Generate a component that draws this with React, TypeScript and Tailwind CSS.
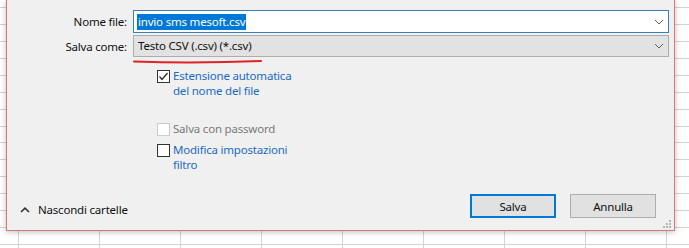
import React from "react";

const font = { fontFamily: '"Noto Sans", "Open Sans", sans-serif' };

function GridBackground() {
  const hs: number[] = [];
  for (let k = 0; k < 15; k++) hs.push(Math.round(7 + k * 16.93) + 0.5);
  const vs: number[] = [18.5];
  for (let k = 1; k < 9; k++) vs.push(18.5 + k * 81);
  return (
    <svg className="absolute inset-0" width="689" height="248">
      {hs.map((y) => (
        <line key={"h" + y} x1="0" x2="689" y1={y} y2={y} stroke="#d4d4d4" strokeWidth="1" />
      ))}
      {vs.map((x) => (
        <line key={"v" + x} x1={x} x2={x} y1="0" y2="248" stroke="#d4d4d4" strokeWidth="1" />
      ))}
    </svg>
  );
}

function ChevronDown() {
  return (
    <svg width="10" height="6" viewBox="0 0 10 6" className="shrink-0">
      <polyline points="1,1 5,5 9,1" fill="none" stroke="#606060" strokeWidth="1" />
    </svg>
  );
}

function Checkbox({ checked, disabled }: { checked?: boolean; disabled?: boolean }) {
  return (
    <div
      className={
        "w-[13px] h-[13px] shrink-0 mt-[2px] border bg-white flex items-center justify-center " +
        (disabled ? "border-[#cccccc]" : "border-[#333333]")
      }
    >
      {checked && (
        <svg width="11" height="11" viewBox="0 0 11 11">
          <polyline points="1.5,5.5 4,8.5 9.5,2" fill="none" stroke="#222" strokeWidth="1.2" />
        </svg>
      )}
    </div>
  );
}

export default function App() {
  return (
    <div
      className="relative w-[689px] h-[248px] bg-white overflow-hidden text-[11.5px] tracking-[-0.2px]"
      style={font}
    >
      <GridBackground />
      <div className="absolute left-[6px] top-0 w-[669px] h-[231px] bg-[#f0f0f0] border-x border-b border-[#d77878] shadow-[0_1px_6px_rgba(0,0,0,0.25)] flex flex-col">
        {/* form rows */}
        <div className="grid grid-cols-[120px_1fr] gap-x-[6px] gap-y-[2px] pt-[10px] pr-[5px] items-center">
          <div className="text-right text-[#111] leading-[15px]">Nome file:</div>
          <div className="h-[23px] border border-[#3a80b8] bg-white flex items-center pl-[3px] pr-[4px]">
            <span className="bg-[#0078d7] text-white leading-[16px] px-[1px]">invio sms mesoft.csv</span>
            <div className="flex-1" />
            <ChevronDown />
          </div>
          <div className="text-right text-[#111] leading-[15px]">Salva come:</div>
          <div className="h-[22px] border border-[#adadad] bg-[#e2e2e2] flex items-center pl-[4px] pr-[4px]">
            <span className="text-[#111] leading-[16px]">Testo CSV (.csv) (*.csv)</span>
            <div className="flex-1" />
            <ChevronDown />
          </div>
        </div>

        {/* checkboxes */}
        <div className="flex flex-col pl-[150px] mt-[11px]">
          <div className="flex items-start gap-[3px]">
            <Checkbox checked />
            <div className="flex flex-col text-[#1a6bc2]">
              <span className="h-[15px] leading-[15px]">Estensione automatica</span>
              <span className="h-[15px] leading-[15px]">del nome del file</span>
            </div>
          </div>
          <div className="flex items-start gap-[3px] mt-[23px]">
            <Checkbox disabled />
            <div className="text-[#7a7a7a] leading-[15px]">Salva con password</div>
          </div>
          <div className="flex items-start gap-[3px] mt-[6px]">
            <Checkbox />
            <div className="flex flex-col text-[#1a6bc2]">
              <span className="h-[15px] leading-[15px]">Modifica impostazioni</span>
              <span className="h-[15px] leading-[15px]">filtro</span>
            </div>
          </div>
        </div>

        {/* bottom row */}
        <div className="mt-auto mb-[12px] flex items-start justify-between pr-[18px]">
          <div className="flex items-center gap-[8px] pl-[13px] mt-[8px]">
            <svg width="10" height="6" viewBox="0 0 10 6">
              <polyline points="1,5 5,1.2 9,5" fill="none" stroke="#333" strokeWidth="1.6" />
            </svg>
            <span className="text-[#111] leading-[15px]">Nascondi cartelle</span>
          </div>
          <div className="flex gap-[14px]">
            <button className="w-[86px] h-[24px] border-2 border-[#0078d7] bg-[#e1e1e1] text-[#111] leading-[15px]">
              Salva
            </button>
            <button className="w-[86px] h-[24px] border border-[#adadad] bg-[#e1e1e1] text-[#111] leading-[15px]">
              Annulla
            </button>
          </div>
        </div>

        {/* resize grip */}
        <svg className="absolute right-[3px] bottom-[2px]" width="8" height="8" viewBox="0 0 8 8">
          <rect x="6" y="0" width="2" height="2" fill="#b5b5b5" />
          <rect x="3" y="3" width="2" height="2" fill="#b5b5b5" />
          <rect x="6" y="3" width="2" height="2" fill="#b5b5b5" />
          <rect x="0" y="6" width="2" height="2" fill="#b5b5b5" />
          <rect x="3" y="6" width="2" height="2" fill="#b5b5b5" />
          <rect x="6" y="6" width="2" height="2" fill="#b5b5b5" />
        </svg>
      </div>

      {/* red hand-drawn underline annotation */}
      <svg className="absolute left-[132px] top-[58px]" width="132" height="8" viewBox="0 0 132 8">
        <path d="M2 3.6 Q 66 5.6 129 3" fill="none" stroke="#e02424" strokeWidth="2" strokeLinecap="round" />
      </svg>
    </div>
  );
}
